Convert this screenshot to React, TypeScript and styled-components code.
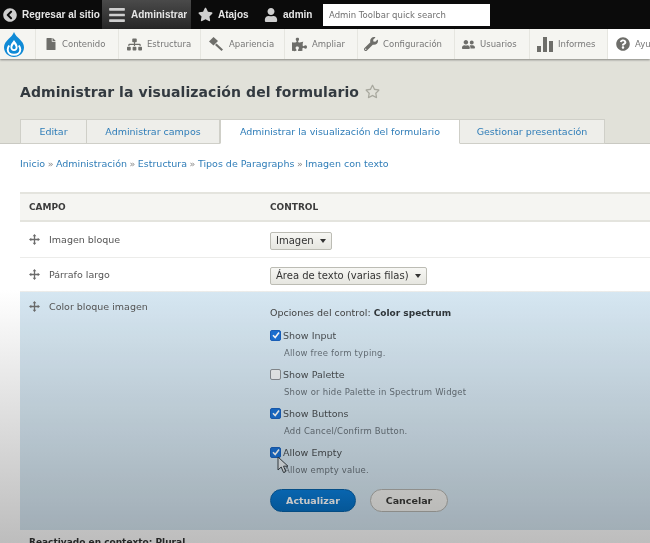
import { ReactNode } from 'react'
import styled, { createGlobalStyle } from 'styled-components'
import {
  FaBars,
  FaChevronCircleLeft,
  FaFile,
  FaPuzzlePiece,
  FaQuestionCircle,
  FaRegStar,
  FaSitemap,
  FaStar,
  FaUser,
  FaUserFriends,
  FaWrench,
} from 'react-icons/fa'

const GlobalStyle = createGlobalStyle`
  html, body {
    margin: 0;
    height: 543px;
    overflow: hidden;
    background: #fff;
    font-family: "DejaVu Sans", sans-serif;
  }
`

const DrupalLogo = () => (
  <svg width="20" height="25" viewBox="0 0 20 25">
    <path d="M10 0c1 3 3.500 5 5.500 7C18 9.500 20 12 20 15.300 20 20.700 15.500 25 10 25S0 20.700 0 15.300C0 12 2 9.500 4.500 7 6.500 5 9 3 10 0z" fill="#0f8ad6" />
    <path d="M5.200 13.500c-.9 1.200-1.500 2.500-1.500 4 0 3.400 2.800 5.300 6.300 5.300s6.300-1.900 6.300-5.300c0-1.500-.6-2.800-1.500-4" fill="none" stroke="#fff" strokeWidth="2" />
    <path d="M10 8c1.500 2.300 3.600 4 3.600 7.300 0 2.100-1.600 3.700-3.600 3.700s-3.600-1.600-3.600-3.700C6.400 12 8.500 10.300 10 8z" fill="#fff" />
    <path d="M10 12c.8 1.200 1.700 2 1.700 3.500 0 1-.8 1.700-1.700 1.700s-1.700-.7-1.700-1.700c0-1.500.9-2.300 1.700-3.500z" fill="#0f8ad6" />
  </svg>
)

const BrushIcon = () => (
  <svg width="16" height="16" viewBox="0 0 16 16" fill="#6e6e6a">
    <path d="M1 5.500 5.500 1 10 5l-4.500 4.500z" />
    <path d="M8.500 7.500 15 13.500 13.500 15 7 9z" />
  </svg>
)

const BarsIcon = () => (
  <svg width="16" height="15" viewBox="0 0 16 15" fill="#6e6e6a">
    <rect x="0" y="9" width="4" height="6" />
    <rect x="6" y="0" width="4" height="15" />
    <rect x="12" y="4" width="4" height="11" />
  </svg>
)

const DragIcon = () => (
  <svg width="11" height="11" viewBox="0 0 12 12" fill="#6b6b6b">
    <path d="M6 0 8 2.500H6.700v2.800h2.800V4L12 6 9.500 8V6.700H6.700v2.800H8L6 12 4 9.500h1.300V6.700H2.500V8L0 6l2.500-2v1.300h2.800V2.500H4z" />
  </svg>
)

const CursorIcon = () => (
  <svg width="12" height="18" viewBox="0 0 12 18">
    <path d="M1 1v13l3.200-3 2.300 5.500 2.300-1-2.300-5.300H11z" fill="#e8eef2" stroke="#3a4248" strokeWidth="1" />
  </svg>
)

const TopBar = styled.header`
  height: 29px;
  background: #0b0b0b;
  display: flex;
  align-items: stretch;
  color: #e6e6e6;
  font-family: "Liberation Sans", sans-serif;
  font-size: 10px;
  font-weight: 700;
  white-space: nowrap;
`

const TopItem = styled.div<{ $w: number; $pad: number; $active?: boolean }>`
  width: ${(p) => p.$w}px;
  flex: none;
  padding-left: ${(p) => p.$pad}px;
  box-sizing: border-box;
  display: flex;
  align-items: center;
  gap: 5px;
  background: ${(p) => (p.$active ? 'linear-gradient(#4a4a4a, #262626)' : 'none')};
  svg {
    flex: none;
    color: #cfcfcf;
  }
`

const QuickSearch = styled.div`
  width: 167px;
  height: 22px;
  margin: 4px 0 0 12px;
  flex: none;
  box-sizing: border-box;
  padding-left: 6px;
  background: #fff;
  color: #6f6f6f;
  font-family: "DejaVu Sans", sans-serif;
  font-weight: 400;
  font-size: 8.5px;
  line-height: 22px;
`

const MenuBar = styled.nav`
  height: 30px;
  display: flex;
  align-items: stretch;
  background: #f5f5f1;
  box-shadow: 0 1px 2px rgba(0, 0, 0, 0.4);
  position: relative;
  color: #777;
  font-size: 8.5px;
  white-space: nowrap;
`

const LogoCell = styled.div`
  width: 35px;
  flex: none;
  padding-left: 4px;
  box-sizing: border-box;
  display: flex;
  align-items: center;
`

const MenuItem = styled.div<{ $w: number; $pad: number; $white?: boolean }>`
  width: ${(p) => p.$w}px;
  flex: none;
  box-sizing: border-box;
  padding-left: ${(p) => p.$pad}px;
  display: flex;
  align-items: center;
  gap: 5px;
  border-left: 1px solid #e6e6e0;
  background: ${(p) => (p.$white ? '#fff' : 'none')};
  overflow: hidden;
  svg {
    flex: none;
    color: #6e6e6a;
  }
`

const PageHead = styled.div`
  background: #e1e1d9;
  height: 85px;
  padding: 0 0 0 20px;
  display: flex;
  flex-direction: column;
  border-bottom: 1px solid #c9c9c2;
  box-sizing: border-box;
`

const TitleRow = styled.div`
  height: 60px;
  display: flex;
  align-items: center;
  gap: 6px;
  padding-top: 5px;
  box-sizing: border-box;
  color: #333a40;
  svg {
    color: #a8a89e;
  }
`

const Title = styled.h1`
  margin: 0;
  font-size: 14px;
  font-weight: 700;
  letter-spacing: 0.08px;
  white-space: nowrap;
`

const Tabs = styled.div`
  display: flex;
  height: 25px;
  margin-bottom: -1px;
`

const Tab = styled.div<{ $w: number; $active?: boolean }>`
  width: ${(p) => p.$w}px;
  flex: none;
  box-sizing: border-box;
  display: flex;
  align-items: center;
  justify-content: center;
  font-size: 9.5px;
  color: #2f7db8;
  white-space: nowrap;
  border: 1px solid #cfcfc8;
  border-left-width: ${(p) => (p.$active ? 1 : 0)}px;
  border-bottom-color: ${(p) => (p.$active ? '#fff' : '#cfcfc8')};
  background: ${(p) => (p.$active ? '#fff' : '#eeeeea')};
  &:first-child {
    border-left-width: 1px;
  }
`

const Content = styled.main`
  padding: 13px 0 0 20px;
`

const Breadcrumb = styled.div`
  height: 35px;
  font-size: 9.5px;
  line-height: 14px;
  color: #2f7db8;
  white-space: nowrap;
`

const CrumbSep = styled.span`
  color: #888;
  margin: 0 2.500px;
`

const Table = styled.section`
  width: 640px;
`

const Row = styled.div<{ $h: number; $head?: boolean; $open?: boolean }>`
  height: ${(p) => p.$h}px;
  box-sizing: border-box;
  display: grid;
  grid-template-columns: 241px 1fr;
  padding-left: 9px;
  align-items: ${(p) => (p.$open ? 'start' : 'center')};
  background: ${(p) => (p.$open ? '#d6e7f2' : p.$head ? '#f5f5f2' : '#fff')};
  border-top: ${(p) => (p.$head ? '2px solid #e4e4de' : 'none')};
  border-bottom: ${(p) => (p.$open ? 'none' : p.$head ? '2px solid #e4e4de' : '1px solid #ececea')};
`

const HeadCell = styled.div`
  font-size: 9px;
  font-weight: 700;
  color: #3c3c3c;
`

const FieldCell = styled.div<{ $open?: boolean }>`
  display: flex;
  align-items: center;
  gap: 9px;
  padding: ${(p) => (p.$open ? '9px 0 0 0' : '0')};
  font-size: 9.5px;
  color: #555;
`

const SelectBox = styled.div`
  display: inline-flex;
  align-items: center;
  gap: 6px;
  height: 18px;
  padding: 0 5px;
  box-sizing: border-box;
  border: 1px solid #bcbcb4;
  border-radius: 2px;
  background: linear-gradient(#f7f7f4, #e6e6e0);
  font-size: 10px;
  color: #333;
  white-space: nowrap;
  &::after {
    content: "";
    border: 3.500px solid transparent;
    border-top: 4px solid #333;
    border-bottom: 0;
  }
`

const Options = styled.div`
  padding-top: 15px;
  font-size: 9.5px;
  color: #444;
  position: relative;
`

const OptionsTitle = styled.div`
  height: 15px;
  margin-bottom: 6px;
  b {
    color: #30363a;
    font-size: 9px;
  }
`

const Option = styled.div`
  height: 39px;
`

const OptionLabel = styled.label`
  display: flex;
  align-items: center;
  gap: 2px;
  height: 14px;
  color: #4a4f52;
`

const Check = styled.span<{ $on?: boolean }>`
  width: 11px;
  height: 11px;
  box-sizing: border-box;
  flex: none;
  border-radius: 2px;
  display: inline-flex;
  align-items: center;
  justify-content: center;
  background: ${(p) => (p.$on ? '#1a73d8' : '#f2f4f5')};
  border: 1px solid ${(p) => (p.$on ? '#1a63c0' : '#8c9094')};
`

const OptionHint = styled.div`
  margin: 6px 0 0 14px;
  font-size: 8.5px;
  letter-spacing: 0.2px;
  color: #68727a;
`

const Buttons = styled.div`
  display: flex;
  gap: 14px;
  margin-top: 5px;
`

const Button = styled.div<{ $w: number; $primary?: boolean }>`
  width: ${(p) => p.$w}px;
  height: 23px;
  box-sizing: border-box;
  border-radius: 12px;
  display: flex;
  align-items: center;
  justify-content: center;
  font-size: 9.500px;
  font-weight: 700;
  color: ${(p) => (p.$primary ? '#fff' : '#3a3a38')};
  background: ${(p) => (p.$primary ? 'linear-gradient(#0a7fdc, #0670c4)' : '#f3f3f0')};
  border: 1px solid ${(p) => (p.$primary ? '#0662aa' : '#b4b4b0')};
`

const Cursor = styled.div`
  position: absolute;
  left: 7px;
  top: 164px;
  line-height: 0;
`

const Reactivado = styled.div`
  padding: 7px 0 0 9px;
  font-size: 9px;
  font-weight: 700;
  color: #333;
`

// the frame darkens towards the bottom, over everything from the middle down
const Vignette = styled.div`
  position: absolute;
  inset: 0;
  pointer-events: none;
  mix-blend-mode: multiply;
  background: linear-gradient(#fff 0, #fff 290px, #bdbdbd 543px);
`

const Frame = styled.div`
  position: relative;
  width: 650px;
  height: 543px;
  overflow: hidden;
  filter: blur(0.35px);
`

const menu: { label: string; w: number; pad: number; icon: ReactNode; white?: boolean }[] = [
  { label: 'Contenido', w: 83, pad: 9, icon: <FaFile size={12} /> },
  { label: 'Estructura', w: 82, pad: 8, icon: <FaSitemap size={15} /> },
  { label: 'Apariencia', w: 84, pad: 7, icon: <BrushIcon /> },
  { label: 'Ampliar', w: 73, pad: 7, icon: <FaPuzzlePiece size={15} /> },
  { label: 'Configuración', w: 97, pad: 6, icon: <FaWrench size={14} /> },
  { label: 'Usuarios', w: 75, pad: 7, icon: <FaUserFriends size={13} /> },
  { label: 'Informes', w: 78, pad: 7, icon: <BarsIcon /> },
  { label: 'Ayuda', w: 60, pad: 8, icon: <FaQuestionCircle size={14} />, white: true },
]

const tabs = [
  { label: 'Editar', w: 67 },
  { label: 'Administrar campos', w: 133 },
  { label: 'Administrar la visualización del formulario', w: 240, active: true },
  { label: 'Gestionar presentación', w: 145 },
]

const crumbs = ['Inicio', 'Administración', 'Estructura', 'Tipos de Paragraphs', 'Imagen con texto']

const options = [
  { label: 'Show Input', hint: 'Allow free form typing.', on: true },
  { label: 'Show Palette', hint: 'Show or hide Palette in Spectrum Widget', on: false },
  { label: 'Show Buttons', hint: 'Add Cancel/Confirm Button.', on: true },
  { label: 'Allow Empty', hint: 'Allow empty value.', on: true },
]

const App = () => {
  return (
    <Frame>
      <GlobalStyle />
      <TopBar>
        <TopItem $w={102} $pad={3}>
          <FaChevronCircleLeft size={14} />
          Regresar al sitio
        </TopItem>
        <TopItem $w={89} $pad={6} $active>
          <FaBars size={18} />
          Administrar
        </TopItem>
        <TopItem $w={64} $pad={7}>
          <FaStar size={15} />
          Atajos
        </TopItem>
        <TopItem $w={56} $pad={9}>
          <FaUser size={14} />
          admin
        </TopItem>
        <QuickSearch>Admin Toolbar quick search</QuickSearch>
      </TopBar>
      <MenuBar>
        <LogoCell>
          <DrupalLogo />
        </LogoCell>
        {menu.map((item) => (
          <MenuItem key={item.label} $w={item.w} $pad={item.pad} $white={item.white}>
            {item.icon}
            {item.label}
          </MenuItem>
        ))}
      </MenuBar>
      <PageHead>
        <TitleRow>
          <Title>Administrar la visualización del formulario</Title>
          <FaRegStar size={15} />
        </TitleRow>
        <Tabs>
          {tabs.map((tab) => (
            <Tab key={tab.label} $w={tab.w} $active={tab.active}>
              {tab.label}
            </Tab>
          ))}
        </Tabs>
      </PageHead>
      <Content>
        <Breadcrumb>
          {crumbs.map((crumb, i) => (
            <span key={crumb}>
              {i > 0 && <CrumbSep>»</CrumbSep>}
              {crumb}
            </span>
          ))}
        </Breadcrumb>
        <Table>
          <Row $h={30} $head>
            <HeadCell>CAMPO</HeadCell>
            <HeadCell>CONTROL</HeadCell>
          </Row>
          <Row $h={36}>
            <FieldCell>
              <DragIcon />
              Imagen bloque
            </FieldCell>
            <div>
              <SelectBox>Imagen</SelectBox>
            </div>
          </Row>
          <Row $h={34}>
            <FieldCell>
              <DragIcon />
              Párrafo largo
            </FieldCell>
            <div>
              <SelectBox>Área de texto (varias filas)</SelectBox>
            </div>
          </Row>
          <Row $h={238} $open>
            <FieldCell $open>
              <DragIcon />
              Color bloque imagen
            </FieldCell>
            <Options>
              <OptionsTitle>
                Opciones del control: <b>Color spectrum</b>
              </OptionsTitle>
              {options.map((option) => (
                <Option key={option.label}>
                  <OptionLabel>
                    <Check $on={option.on}>
                      {option.on && (
                        <svg width="8" height="8" viewBox="0 0 8 8">
                          <path d="M1 4.200 3.200 6.500 7 1.500" fill="none" stroke="#fff" strokeWidth="1.600" />
                        </svg>
                      )}
                    </Check>
                    {option.label}
                  </OptionLabel>
                  <OptionHint>{option.hint}</OptionHint>
                </Option>
              ))}
              <Buttons>
                <Button $w={86} $primary>Actualizar</Button>
                <Button $w={78}>Cancelar</Button>
              </Buttons>
              <Cursor>
                <CursorIcon />
              </Cursor>
            </Options>
          </Row>
          <Reactivado>Reactivado en contexto: Plural</Reactivado>
        </Table>
      </Content>
      <Vignette />
    </Frame>
  )
}

export default App
